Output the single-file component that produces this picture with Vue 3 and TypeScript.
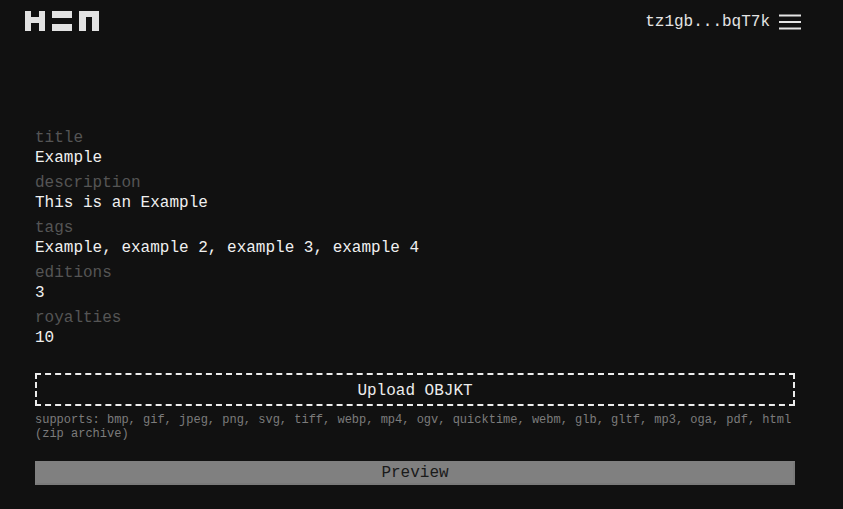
<script setup lang="ts">
const fields: { label: string; value: string }[] = [
  { label: 'title', value: 'Example' },
  { label: 'description', value: 'This is an Example' },
  { label: 'tags', value: 'Example, example 2, example 3, example 4' },
  { label: 'editions', value: '3' },
  { label: 'royalties', value: '10' },
]
const formats =
  'supports: bmp, gif, jpeg, png, svg, tiff, webp, mp4, ogv, quicktime, webm, glb, gltf, mp3, oga, pdf, html (zip archive)'
</script>

<template>
  <div class="page">
    <header class="top">
      <svg class="logo" width="74" height="20" viewBox="0 0 74 20" fill="#e2e2e2" aria-label="HEN">
        <path d="M0 0h6v6h8V0h6v20h-6v-8H6v8H0z" />
        <path d="M27 0h20v7H27zM27 13h20v7H27z" />
        <path d="M54 0h20v20h-7V6h-6v14h-7z" />
      </svg>
      <div class="account">
        <span class="wallet">tz1gb...bqT7k</span>
        <svg class="menu" width="22" height="16" viewBox="0 0 22 16" fill="#e4e4e4" aria-label="menu">
          <rect x="0" y="0.5" width="22" height="2" />
          <rect x="0" y="7" width="22" height="2" />
          <rect x="0" y="13.5" width="22" height="2" />
        </svg>
      </div>
    </header>
    <main class="form">
      <div v-for="f in fields" :key="f.label" class="field">
        <div class="label">{{ f.label }}</div>
        <div class="value">{{ f.value }}</div>
      </div>
      <div class="upload">Upload OBJKT</div>
      <p class="supports">{{ formats }}</p>
      <button class="preview">Preview</button>
    </main>
  </div>
</template>

<style scoped>
.page {
  width: 843px;
  height: 509px;
  overflow: hidden;
  background: #111111;
  font-family: "Liberation Mono", "Courier New", monospace;
  font-size: 16px;
  color: #f0f0f0;
}
.top {
  display: flex;
  justify-content: space-between;
  align-items: flex-start;
  padding: 11px 42px 0 25px;
  height: 128px;
  box-sizing: border-box;
}
.logo {
  display: block;
}
.account {
  display: flex;
  align-items: center;
  gap: 9px;
  height: 20px;
}
.wallet {
  padding-top: 1px;
  line-height: 20px;
  color: #e4e4e4;
}
.menu {
  display: block;
  margin-top: 1px;
  margin-bottom: -1px;
}
.form {
  width: 760px;
  margin-left: 35px;
}
.field {
  margin-bottom: 5px;
  line-height: 20px;
}
.label {
  color: #555555;
}
.value {
  color: #f0f0f0;
}
.upload {
  box-sizing: border-box;
  height: 33px;
  margin-top: 25px;
  border: 2px dashed #ececec;
  text-align: center;
  line-height: 32px;
  color: #ececec;
}
.supports {
  margin: 7px 0 0;
  font-size: 12px;
  line-height: 14px;
  color: #7c7c7c;
}
.preview {
  display: block;
  box-sizing: border-box;
  width: 100%;
  height: 24px;
  margin-top: 20px;
  padding: 0;
  border: 2px solid #7a7a7a;
  border-top-color: #808080;
  border-left-color: #808080;
  background: #808080;
  font: inherit;
  line-height: 20px;
  color: #1a1a1a;
}
</style>
